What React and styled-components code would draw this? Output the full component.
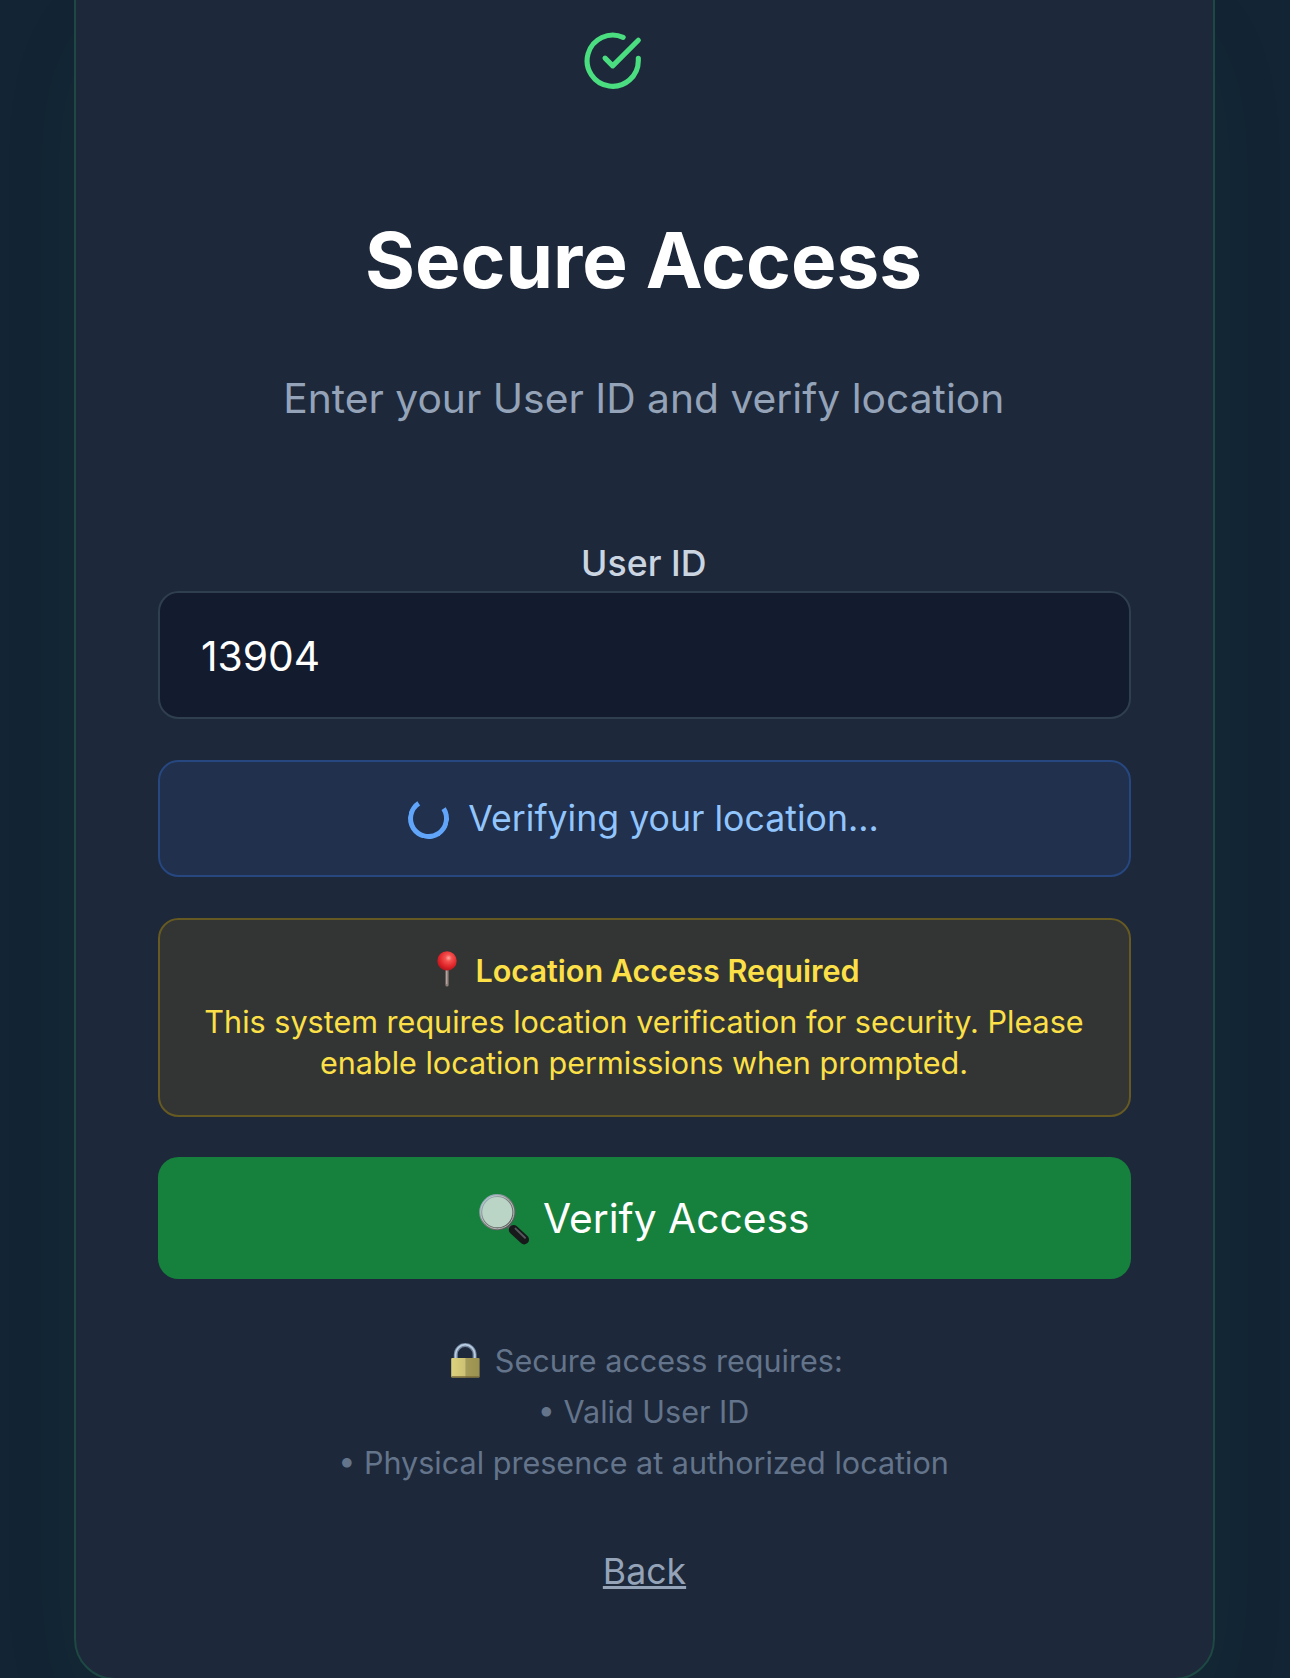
import React from "react";
import styled, { createGlobalStyle } from "styled-components";

const Global = createGlobalStyle`
  html, body { margin: 0; padding: 0; background: #132433; }
  * { box-sizing: border-box; }
  body { font-family: Inter, "Liberation Sans", sans-serif; -webkit-font-smoothing: antialiased; }
`;

const Page = styled.main`
  height: 1678px;
  overflow: hidden;
  display: flex;
  justify-content: center;
  align-items: flex-start;
  background: #132434;
`;

const Card = styled.section`
  width: 1141px;
  height: 1740.4px;
  margin: -60px 1px 0 0;
  padding: 88px 82px 0;
  border: 2px solid #1e4843;
  border-radius: 41px;
  background: #1d283a;
  box-shadow: 0 64px 128px -31px rgba(34, 197, 94, 0.065);
  display: flex;
  flex-direction: column;
  text-align: center;
`;

const StatusIcon = styled.svg`
  width: 61.44px;
  height: 61.44px;
  margin: 0 63.6px 0 0;
  align-self: center;
  flex: none;
`;

const Title = styled.h1`
  margin: 123px 0 0;
  padding-right: 2px;
  font-size: 76.4px;
  line-height: 92.16px;
  font-weight: 700;
  color: #fff;
`;

const Subtitle = styled.p`
  margin: 61px 0 0;
  padding-right: 1.5px;
  font-size: 40.78px;
  line-height: 61.4px;
  color: #94a3b8;
`;

const Label = styled.label`
  margin-top: 109px;
  padding-right: 1.5px;
  font-size: 35.66px;
  line-height: 51.2px;
  font-weight: 500;
  color: #cbd5e1;
`;

const Field = styled.input`
  display: block;
  width: 100%;
  height: 127.4px;
  flex: none;
  margin: 2px 0 0.4px;
  padding: 2px 41px 0;
  border: 2px solid #2f3f50;
  border-radius: 20.5px;
  background: #131b2e;
  color: #fff;
  font: 400 40.78px Inter, "Liberation Sans", sans-serif;
  outline: none;
`;

const Notice = styled.div`
  margin-top: 41px;
  padding: ${(p) => (p.$tone === "info" ? "31.3px" : "30.9px")} 31px;
  border: 2px solid ${(p) => (p.$tone === "info" ? "#26477f" : "#665922")};
  border-radius: 20.5px;
  background: ${(p) => (p.$tone === "info" ? "#20304d" : "#323534")};
  color: ${(p) => (p.$tone === "info" ? "#93c5fd" : "#fde047")};
`;

const Progress = styled.div`
  display: flex;
  align-items: center;
  justify-content: center;
  gap: 19px;
  padding-right: 2px;
  font-size: 35.66px;
  line-height: 50.6px;
`;

const Spinner = styled.span`
  width: 41px;
  height: 41px;
  border: 5.12px solid #60a5fa;
  border-top-color: transparent;
  border-radius: 50%;
  transform: rotate(12deg);
`;

const NoticeTitle = styled.div`
  display: flex;
  align-items: center;
  justify-content: center;
  gap: 9px;
  margin-top: -1.4px;
  font-size: 30.57px;
  line-height: 41px;
  font-weight: 600;
`;

const NoticeText = styled.p`
  margin: 11.4px 0 0;
  padding-right: 1px;
  font-size: 30.57px;
  line-height: 40.96px;
`;

const VerifyButton = styled.button`
  height: 122.3px;
  flex: none;
  margin-top: 40.2px;
  padding: 1.5px 0 0;
  display: flex;
  align-items: center;
  justify-content: center;
  gap: 11.5px;
  border: 0;
  border-radius: 20.5px;
  background: #16803d;
  color: #fff;
  font: 400 40.78px/61.4px Inter, "Liberation Sans", sans-serif;
`;

const Requirements = styled.div`
  margin-top: 61.4px;
  display: flex;
  flex-direction: column;
  gap: 10.1px;
  font-size: 30.57px;
  line-height: 40.96px;
  color: #64748b;
`;

const Requirement = styled.div`
  display: flex;
  align-items: center;
  justify-content: center;
  gap: 8.6px;
  padding-left: ${(p) => (p.$lead ? "2px" : "0")};
  padding-right: ${(p) => (p.$lead ? "0" : "2px")};
`;

const Emoji = styled.svg`
  width: ${(p) => p.$w}px;
  height: ${(p) => p.$h}px;
  flex: none;
  overflow: visible;
`;

const BackLink = styled.a`
  margin-top: 62px;
  align-self: center;
  font-size: 35.66px;
  line-height: 51.2px;
  color: #94a3b8;
  text-decoration: underline;
`;

function Pin() {
  return (
    <Emoji $w={37} $h={41} viewBox="0 0 37 41">
      <defs>
        <radialGradient id="pinBall" cx="0.58" cy="0.35" r="0.65">
          <stop offset="0" stopColor="#ffaaa3" />
          <stop offset="0.25" stopColor="#f55450" />
          <stop offset="0.7" stopColor="#df2529" />
          <stop offset="1" stopColor="#b5161d" />
        </radialGradient>
      </defs>
      <path d="M18 18V35" stroke="#8f7f7b" strokeWidth="3.2" strokeLinecap="round" />
      <path d="M17.6 20V34" stroke="#b5a39e" strokeWidth="1.2" />
      <circle cx="18" cy="10.9" r="9.7" fill="url(#pinBall)" />
    </Emoji>
  );
}

function Magnifier() {
  return (
    <Emoji $w={52} $h={52} viewBox="0 0 52 52">
      <defs>
        <linearGradient id="rim" x1="0" y1="0" x2="1" y2="1">
          <stop offset="0" stopColor="#9fc0cf" />
          <stop offset="0.5" stopColor="#777b7b" />
          <stop offset="1" stopColor="#4d4d4d" />
        </linearGradient>
      </defs>
      <path d="M29.5 33L34 37.5" stroke="#5b5f60" strokeWidth="4" />
      <path d="M34.6 36.8L45.2 46.6" stroke="#17191b" strokeWidth="9.6" strokeLinecap="round" />
      <path d="M36.5 35.6L46 44.8" stroke="#55585b" strokeWidth="2" strokeLinecap="round" />
      <circle cx="18.3" cy="19.2" r="16.6" fill="#bad5c5" stroke="url(#rim)" strokeWidth="3" />
      <circle cx="18.3" cy="19.2" r="16.6" fill="none" stroke="#c9cfcd" strokeWidth="0.8" />
    </Emoji>
  );
}

function Lock() {
  return (
    <Emoji $w={38} $h={41} viewBox="0 0 38 41">
      <defs>
        <linearGradient id="lockBody">
          <stop offset="0" stopColor="#ddd27c" />
          <stop offset="0.48" stopColor="#cdc275" />
          <stop offset="0.52" stopColor="#a69c59" />
          <stop offset="1" stopColor="#9a904f" />
        </linearGradient>
      </defs>
      <path d="M7.8 18V13.5a9.4 9.4 0 0 1 18.8 0V18" fill="none" stroke="#71849c" strokeWidth="4" />
      <path d="M7.6 18V13.3a9.6 9.6 0 0 1 19.2 0V18" fill="none" stroke="#b8cde2" strokeWidth="1.8" />
      <rect x="3.2" y="17" width="28.4" height="19.6" rx="1" fill="url(#lockBody)" />
      <path d="M3.6 35.9H31.2" stroke="#7a6a3a" strokeWidth="1.3" />
    </Emoji>
  );
}

export default function App() {
  return (
    <>
      <Global />
      <Page>
        <Card>
          <StatusIcon
            viewBox="0 0 24 24"
            fill="none"
            stroke="#4ade80"
            strokeWidth="2"
            strokeLinecap="round"
            strokeLinejoin="round"
          >
            <path d="M22 11.08V12a10 10 0 1 1-5.93-9.14" />
            <path d="m9 11 3 3L22 4" />
          </StatusIcon>
          <Title>Secure Access</Title>
          <Subtitle>Enter your User ID and verify location</Subtitle>
          <Label htmlFor="user-id">User ID</Label>
          <Field id="user-id" defaultValue="13904" />
          <Notice $tone="info">
            <Progress>
              <Spinner />
              <span>Verifying your location...</span>
            </Progress>
          </Notice>
          <Notice $tone="warning">
            <NoticeTitle>
              <Pin />
              <span>Location Access Required</span>
            </NoticeTitle>
            <NoticeText>
              This system requires location verification for security. Please enable location
              permissions when prompted.
            </NoticeText>
          </Notice>
          <VerifyButton>
            <Magnifier />
            <span>Verify Access</span>
          </VerifyButton>
          <Requirements>
            <Requirement $lead>
              <Lock />
              <span>Secure access requires:</span>
            </Requirement>
            <Requirement>• Valid User ID</Requirement>
            <Requirement>• Physical presence at authorized location</Requirement>
          </Requirements>
          <BackLink>Back</BackLink>
        </Card>
      </Page>
    </>
  );
}
